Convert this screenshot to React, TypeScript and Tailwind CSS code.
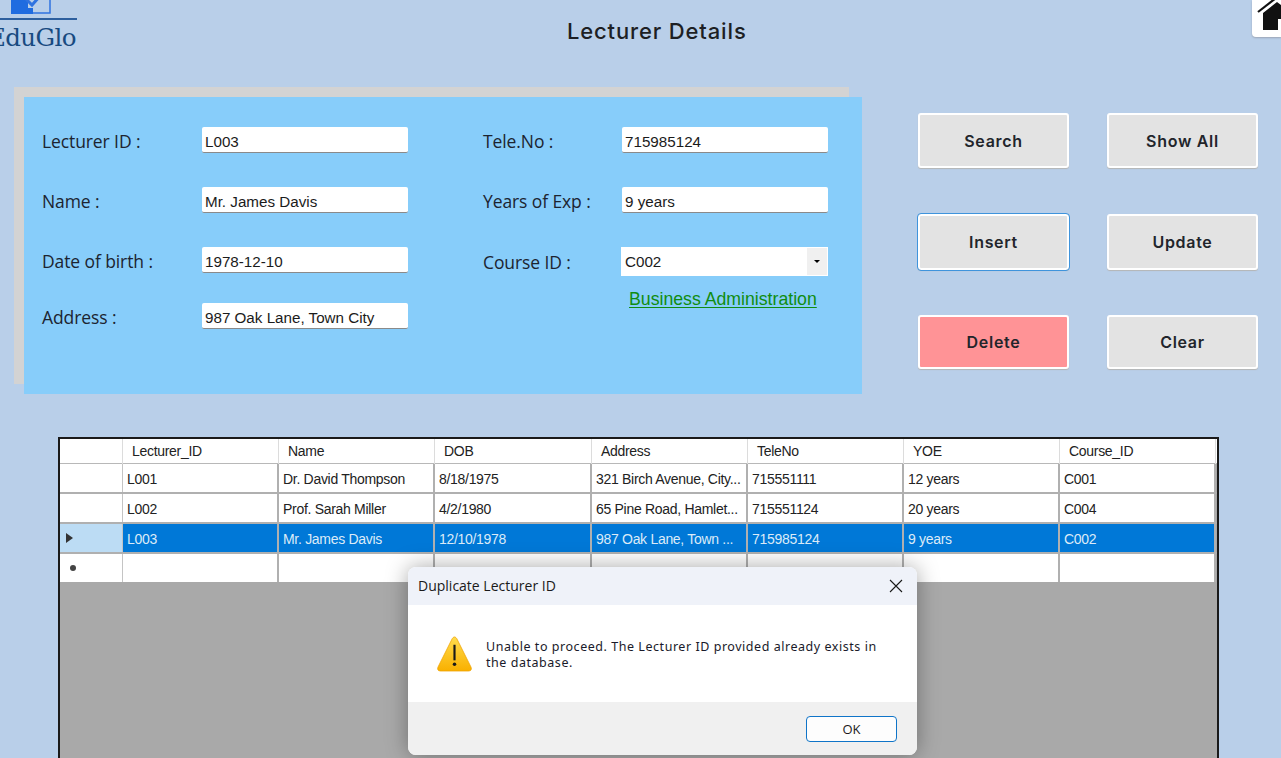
import React from 'react';

const sans = 'font-["Open_Sans",sans-serif]';
const arial = 'font-["Liberation_Sans",Arial,sans-serif]';

const leftFields = [
  { label: 'Lecturer ID :', value: 'L003', rowClass: 'h-[60px]' },
  { label: 'Name :', value: 'Mr. James Davis', rowClass: 'h-[60px]' },
  { label: 'Date of birth :', value: '1978-12-10', rowClass: 'h-[56px]' },
  { label: 'Address :', value: '987 Oak Lane, Town City', rowClass: 'h-[26px]' },
];

const rightFields = [
  { label: 'Tele.No :', value: '715985124' },
  { label: 'Years of Exp :', value: '9 years' },
];

const columns = ['Lecturer_ID', 'Name', 'DOB', 'Address', 'TeleNo', 'YOE', 'Course_ID'];

const rows = [
  ['L001', 'Dr. David Thompson', '8/18/1975', '321 Birch Avenue, City...', '715551111', '12 years', 'C001'],
  ['L002', 'Prof. Sarah Miller', '4/2/1980', '65 Pine Road, Hamlet...', '715551124', '20 years', 'C004'],
  ['L003', 'Mr. James Davis', '12/10/1978', '987 Oak Lane, Town ...', '715985124', '9 years', 'C002'],
];

const gridCols = 'grid grid-cols-[63px_156px_156px_157px_156px_156px_156px_156px]';

const Field = ({ label, value, rowClass, inputLeft }: { label: string; value: string; rowClass: string; inputLeft: string }) => (
  <div className={`flex items-start ${rowClass}`}>
    <div className={`${inputLeft} ${sans} text-[17.5px] leading-[26px] tracking-[-0.1px] text-[#1c2430] pt-[1px]`}>{label}</div>
    <div className={`w-[206px] h-[26px] bg-white rounded-[2px] border-b-[1.5px] border-[#8a8a8a] pl-[3px] ${arial} text-[15.2px] leading-[29px] text-[#1b1b1b]`}>
      {value}
    </div>
  </div>
);

const ActionButton = ({ text, className }: { text: string; className: string }) => (
  <button className={`w-[151px] rounded-[3px] text-[16px] font-semibold tracking-[0.7px] text-[#22252b] font-["Inter",sans-serif] shadow-[0_1px_1px_#b5b5b5] ${className}`}>
    {text}
  </button>
);

export default function App() {
  return (
    <div className="relative w-[1281px] h-[758px] overflow-hidden bg-[#b9cfe9]">
      {/* header */}
      <div className="flex h-[87px] items-start">
        <div className="w-[77px] -ml-[1px] shrink-0">
          <svg width="78" height="20" viewBox="0 0 78 20" className="block">
            <rect x="13" y="-6" width="38" height="19" fill="none" stroke="#2f73e0" strokeWidth="1.5" />
            <rect x="12" y="-6" width="17" height="20" fill="#1f6ce0" />
            <rect x="29" y="8" width="5" height="6" fill="#1f6ce0" />
            <path d="M27 -1 L33 5 L42 -5" fill="none" stroke="#2f73e0" strokeWidth="3" />
            <rect x="0" y="18" width="78" height="2" fill="#2d5f9e" />
          </svg>
          <div className='-ml-[11px] mt-[3px] font-["DejaVu_Serif",serif] text-[24.5px] leading-[29px] tracking-[-0.6px] text-[#174a80] whitespace-nowrap'>
            EduGlo
          </div>
        </div>
        <div className='ml-[491px] mt-[18px] w-[180px] font-["Inter",sans-serif] text-[22px] leading-[27px] font-medium tracking-[0.85px] text-[#1d1f24] whitespace-nowrap'>
          Lecturer Details
        </div>
        <div className="ml-auto w-[29px] h-[37px] bg-white rounded-bl-[4px] shadow-[0_1px_2px_#9aa5b5] overflow-hidden">
          <svg width="29" height="37" viewBox="0 0 29 37" className="block">
            <path d="M6 12 L24 -2" fill="none" stroke="#111111" strokeWidth="2.2" />
            <path d="M11 13 L25 2 L29 5 V19 H26 V30 H11 Z" fill="#111111" />
          </svg>
        </div>
      </div>

      {/* form and buttons */}
      <div className="flex items-start">
        <div className="ml-[14px] w-[835px] h-[297px] bg-[#d3d3d3] shrink-0">
          <div className="ml-[10px] mt-[10px] w-[838px] h-[297px] bg-[#87cdfa] flex pt-[30px]">
            <div className="pl-[18px] w-[459px]">
              {leftFields.map((f) => (
                <Field key={f.label} label={f.label} value={f.value} rowClass={f.rowClass} inputLeft="w-[160px]" />
              ))}
            </div>
            <div className="w-[345px]">
              {rightFields.map((f) => (
                <Field key={f.label} label={f.label} value={f.value} rowClass="h-[60px]" inputLeft="w-[139px]" />
              ))}
              <div className="flex items-start h-[43px]">
                <div className={`w-[139px] ${sans} text-[17.5px] leading-[26px] tracking-[-0.1px] text-[#1c2430] pt-[2px]`}>Course ID :</div>
                <div className={`w-[207px] h-[29px] -ml-[1px] bg-white flex ${arial} text-[15.2px] leading-[29px] text-[#1b1b1b]`}>
                  <span className="flex-1 pl-[4px]">C002</span>
                  <span className="w-[20px] h-[27px] mt-[1px] mr-[1px] bg-[#f0f0f0] flex items-center justify-center">
                    <span className="w-0 h-0 border-x-[3px] border-x-transparent border-t-[3px] border-t-black" />
                  </span>
                </div>
              </div>
              <div className={`ml-[146px] -mt-[1px] ${arial} text-[17.7px] leading-[20px] text-[#108c10] underline underline-offset-[2px] whitespace-nowrap`}>
                Business Administration
              </div>
            </div>
          </div>
        </div>

        <div className="ml-[69px] mt-[26px] w-[340px] flex flex-col">
          <div className="flex gap-[38px] h-[55px]">
            <ActionButton text="Search" className="bg-[#e3e3e3] border-[2px] border-white" />
            <ActionButton text="Show All" className="bg-[#e3e3e3] border-[2px] border-white" />
          </div>
          <div className="flex gap-[38px] h-[56px] mt-[46px]">
            <ActionButton text="Insert" className="bg-[#e3e3e3] border-[2px] border-white outline-[1.5px] outline-solid outline-[#3f94dc]" />
            <ActionButton text="Update" className="bg-[#e3e3e3] border-[2px] border-white" />
          </div>
          <div className="flex gap-[38px] h-[54px] mt-[45px]">
            <ActionButton text="Delete" className="bg-[#ff9396] border-[2px] border-white" />
            <ActionButton text="Clear" className="bg-[#e3e3e3] border-[2px] border-white" />
          </div>
        </div>
      </div>

      {/* data grid */}
      <div className={`ml-[58px] mt-[53px] w-[1161px] h-[330px] bg-[#a9a9a9] border-2 border-b-0 border-[#1a1a1a] ${arial} text-[14px] tracking-[-0.3px] text-[#222222]`}>
        <div className={`${gridCols} h-[25px] bg-white border-b border-[#b8b8b8]`}>
          <div className="border-r border-[#dcdcdc]" />
          {columns.map((c) => (
            <div key={c} className="pl-[9px] leading-[25px] border-r border-[#dcdcdc]">{c}</div>
          ))}
        </div>
        {rows.map((row, i) => {
          const selected = i === 2;
          return (
            <div key={row[0]} className={`${gridCols} h-[30px] border-b-2 border-[#b0b0b0] ${selected ? 'text-[#dcebf8]' : ''}`}>
              <div className={`flex items-center pl-[6px] border-r border-[#c4c4c4] ${selected ? 'bg-[#bcdcf4]' : 'bg-white'}`}>
                {selected && <span className="w-0 h-0 border-y-[5px] border-y-transparent border-l-[7px] border-l-[#333333]" />}
              </div>
              {row.map((cell, j) => (
                <div
                  key={j}
                  className={`pl-[4px] leading-[30px] whitespace-nowrap overflow-hidden border-r-2 border-[#b0b0b0] ${selected ? 'bg-[#0078d7]' : 'bg-white'}`}
                >
                  {cell}
                </div>
              ))}
            </div>
          );
        })}
        <div className={`${gridCols} h-[28px]`}>
          <div className="bg-white flex items-center pl-[10px] border-r border-[#c4c4c4]">
            <span className="w-[6px] h-[6px] rounded-full bg-[#444444]" />
          </div>
          {columns.map((c) => (
            <div key={c} className="bg-white border-r-2 border-[#b0b0b0]" />
          ))}
        </div>
      </div>

      {/* message box */}
      <div className="absolute left-[408px] top-[567px] w-[509px] h-[188px] rounded-[8px] overflow-hidden bg-white shadow-[0_0_22px_rgba(0,0,0,0.35)] flex flex-col">
        <div className={`h-[38px] bg-[#eff2f9] flex items-center justify-between pl-[10px] pr-[14px] pb-[2px] ${sans} text-[14px] text-[#1a1a1a]`}>
          <span>Duplicate Lecturer ID</span>
          <svg width="14" height="14" viewBox="0 0 14 14" className="mt-[2px]">
            <path d="M1 1 L13 13 M13 1 L1 13" stroke="#1a1a1a" strokeWidth="1.1" fill="none" />
          </svg>
        </div>
        <div className="h-[97px] flex pl-[29px] pt-[31px]">
          <svg width="35" height="36" viewBox="0 0 36 37" className="shrink-0">
            <defs>
              <linearGradient id="warn" x1="0" y1="0" x2="0" y2="1">
                <stop offset="0" stopColor="#ffdc4d" />
                <stop offset="1" stopColor="#f9b000" />
              </linearGradient>
            </defs>
            <path d="M18 1 C19 1 20 2 20.5 3 L35 32 C36 34 35 36 32.5 36 H3.5 C1 36 0 34 1 32 L15.5 3 C16 2 17 1 18 1 Z" fill="url(#warn)" stroke="#f0a400" strokeWidth="0.8" />
            <rect x="16.9" y="9" width="2.2" height="16" fill="#1a1a1a" />
            <circle cx="18" cy="29" r="1.8" fill="#1a1a1a" />
          </svg>
          <div className='ml-[14px] mt-[3px] w-[400px] font-["Noto_Sans",sans-serif] text-[12.5px] leading-[16px] tracking-[0.54px] text-[#1a1a2a]'>
            Unable to proceed. The Lecturer ID provided already exists in the database.
          </div>
        </div>
        <div className="flex-1 bg-[#f0f0f0] flex justify-end items-start pt-[14px] pr-[20px]">
          <button className={`w-[91px] h-[26px] bg-[#fdfdfd] border-[1.5px] border-[#0f74c8] rounded-[4px] ${sans} text-[13px] leading-[22px] text-[#1a1a1a]`}>
            OK
          </button>
        </div>
      </div>
    </div>
  );
}
